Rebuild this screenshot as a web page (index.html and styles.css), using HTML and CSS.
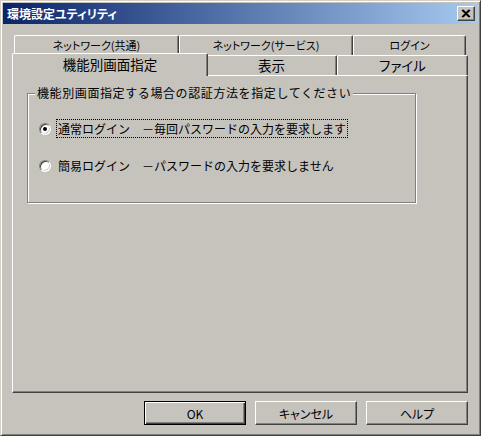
FILE: index.html
```html
<!DOCTYPE html>
<html>
<head>
    <meta charset="UTF-8">
    <title>環境設定ユティリティ</title>
    <link rel="stylesheet" href="styles.css">
</head>
<body>
    <div class="window">
        <div class="titlebar">
            <span class="title">環境設定ユティリティ</span>
            <span class="close">
                <svg width="16" height="13" viewBox="0 0 16 13">
                    <path d="M4 3 L11 10 M5 3 L12 10 M11 3 L4 10 M12 3 L5 10" stroke="#000" stroke-width="1.4" fill="none"/>
                </svg>
            </span>
        </div>
        <div class="client">
            <div class="tabs">
                <div class="tab-row back">
                    <div class="tab t-common">ネットワーク(共通)</div>
                    <div class="tab t-service">ネットワーク(サービス)</div>
                    <div class="tab t-login">ログイン</div>
                </div>
                <div class="tab-row front">
                    <div class="tab t-screen selected">機能別画面指定</div>
                    <div class="tab t-view">表示</div>
                    <div class="tab t-file">ファイル</div>
                </div>
            </div>
            <div class="panel">
                <fieldset class="group">
                    <legend>機能別画面指定する場合の認証方法を指定してください</legend>
                    <label class="radio">
                        <span class="radio-box checked"></span>
                        <span class="radio-text focused">通常ログイン　－毎回パスワードの入力を要求します</span>
                    </label>
                    <label class="radio">
                        <span class="radio-box"></span>
                        <span class="radio-text">簡易ログイン　－パスワードの入力を要求しません</span>
                    </label>
                </fieldset>
            </div>
            <div class="buttons">
                <button class="btn default">OK</button>
                <button class="btn">キャンセル</button>
                <button class="btn">ヘルプ</button>
            </div>
        </div>
    </div>
</body>
</html>
```

FILE: styles.css
```css
body {
    margin: 0;
    background-color: #c6c3bc;
}
.window {
    width: 481px;
    height: 436px;
    box-sizing: border-box;
    background-color: #c6c3bc;
    border: 1px solid;
    border-color: #d4d0c8 #404040 #404040 #d4d0c8;
    box-shadow: inset 1px 1px 0 #fff, inset -1px -1px 0 #808080;
    padding: 2px;
    font-family: "Noto Sans CJK JP", sans-serif;
    font-size: 12px;
    color: #000;
}
.titlebar {
    height: 21px;
    background: linear-gradient(to right, #0a246a, #a6caf0);
    display: flex;
    align-items: center;
    justify-content: space-between;
    padding: 0 3px 0 4px;
}
.title {
    color: #fff;
    font-weight: bold;
    font-size: 12px;
    font-feature-settings: "palt";
}
.close {
    width: 18px;
    height: 15px;
    box-sizing: border-box;
    background-color: #c6c3bc;
    border: 1px solid;
    border-color: #fff #404040 #404040 #fff;
    box-shadow: inset -1px -1px 0 #808080;
    display: flex;
    align-items: center;
    justify-content: center;
}
.client {
    padding: 11px 10px 0 9px;
}
.tab-row {
    display: flex;
    height: 20px;
    padding-left: 2px;
}
.tab {
    flex: none;
    box-sizing: border-box;
    border-left: 1px solid #fff;
    border-top: 1px solid #fff;
    border-right: 1px solid #404040;
    box-shadow: inset -1px 0 0 #808080;
    border-radius: 2px 2px 0 0;
    text-align: center;
    background-color: #c6c3bc;
    font-feature-settings: "palt";
}
.back .tab {
    font-size: 11px;
    line-height: 18px;
}
.front .tab {
    font-size: 13.5px;
    line-height: 19px;
}
.t-common { width: 165px; }
.t-service { width: 174px; }
.t-login { width: 113px; }
.t-screen { width: 196px; }
.t-view { width: 131px; }
.t-file { width: 131px; }
.tab.selected {
    margin: -2px -2px -1px -2px;
    line-height: 21px;
    position: relative;
    z-index: 1;
}
.panel {
    height: 318px;
    box-sizing: border-box;
    border: 1px solid;
    border-color: #fff #404040 #404040 #fff;
    box-shadow: inset -1px -1px 0 #808080;
    padding: 9px 0 0 14px;
}
.group {
    width: 389px;
    box-sizing: border-box;
    margin: 0;
    padding: 0 0 27px 0;
    border: 1px solid #808080;
    box-shadow: inset 1px 1px 0 #fff, 1px 1px 0 #fff;
}
.group legend {
    margin-left: 7px;
    padding: 0 2px;
    line-height: 16px;
    letter-spacing: 0.6px;
    background-color: #c6c3bc;
}
.radio {
    display: flex;
    align-items: center;
    height: 19px;
    margin: 18px 0 0 11px;
}
.radio-box {
    width: 12px;
    height: 12px;
    box-sizing: border-box;
    border-radius: 50%;
    background-color: #fff;
    border: 1px solid;
    border-color: #808080 #fff #fff #808080;
    box-shadow: inset 1px 1px 0 #404040, inset -1px -1px 0 #d4d0c8;
    display: flex;
    align-items: center;
    justify-content: center;
    margin-right: 5px;
}
.radio-box.checked::after {
    content: "";
    width: 4px;
    height: 4px;
    border-radius: 50%;
    background-color: #000;
}
.radio-text {
    padding: 0 1px;
    line-height: 17px;
    border: 1px dotted transparent;
}
.radio-text.focused {
    border-color: #000;
}
.buttons {
    display: flex;
    justify-content: flex-end;
    gap: 9px;
    margin-top: 8px;
}
.btn {
    width: 102px;
    height: 24px;
    box-sizing: border-box;
    background-color: #c6c3bc;
    border: 1px solid;
    border-color: #fff #404040 #404040 #fff;
    box-shadow: inset -1px -1px 0 #808080;
    font-family: "Noto Sans CJK JP", sans-serif;
    font-size: 12px;
    font-feature-settings: "palt";
    padding: 0;
    color: #000;
}
.btn.default {
    border: 1px solid #000;
    box-shadow: inset 1px 1px 0 #fff, inset -1px -1px 0 #404040, inset -2px -2px 0 #808080;
}
```
